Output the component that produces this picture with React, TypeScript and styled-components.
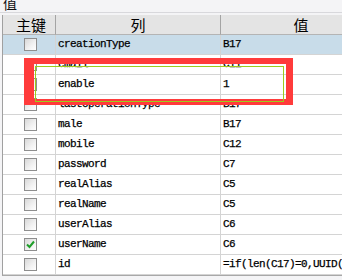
import React from "react"
import styled, { createGlobalStyle } from "styled-components"

const GlobalStyle = createGlobalStyle`
  html, body {
    margin: 0;
    padding: 0;
    background: #f0f0f0;
    overflow: hidden;
  }
`

type Row = { key: boolean; column: string; value: string }

const rows: Row[] = [
  { key: false, column: "creationType", value: "B17" },
  { key: false, column: "email", value: "C11" },
  { key: false, column: "enable", value: "1" },
  { key: false, column: "lastOperationType", value: "B17" },
  { key: false, column: "male", value: "B17" },
  { key: false, column: "mobile", value: "C12" },
  { key: false, column: "password", value: "C7" },
  { key: false, column: "realAlias", value: "C5" },
  { key: false, column: "realName", value: "C5" },
  { key: false, column: "userAlias", value: "C6" },
  { key: true, column: "userName", value: "C6" },
  { key: false, column: "id", value: "=if(len(C17)=0,UUID(),C17)" },
]

const Panel = styled.div`
  position: relative;
  width: 342px;
  height: 280px;
  overflow: hidden;
  background: #f4f4f6;
  display: flex;
  flex-direction: column;
`

const GroupTitle = styled.div`
  height: 12px;
  border-bottom: 1px solid #d8d8dc;
  font-family: "Noto Sans CJK SC", sans-serif;
  font-size: 14px;
  line-height: 12px;
  color: #111;
  padding-left: 3px;
  overflow: hidden;
  span {
    position: relative;
    top: -3px;
  }
`

const Grid = styled.div`
  margin: 2px 0 0 2px;
  border-left: 1px solid #a0a0a0;
  border-bottom: 1px solid #a8a8a8;
  display: grid;
  grid-template-columns: 53px 165px 160px;
  grid-auto-rows: 20px;
  grid-template-rows: 20px;
  background: #fff;
  width: max-content;
`

const HeadCell = styled.div<{ $last?: boolean; $pad?: number }>`
  background: #e4e4e4;
  border-bottom: 1px solid #b4b4b4;
  border-right: ${(p) => (p.$last ? "none" : "1px solid #a4a4a4")};
  box-sizing: border-box;
  font-family: "Noto Sans CJK SC", sans-serif;
  font-size: 15px;
  line-height: 19px;
  color: #000;
  display: flex;
  justify-content: center;
  padding-left: ${(p) => p.$pad ?? 0}px;
`

const Cell = styled.div<{ $selected?: boolean; $last?: boolean }>`
  background: ${(p) => (p.$selected ? "#c8dce9" : "#fff")};
  border-bottom: 1px solid #d4d4d4;
  border-right: ${(p) => (p.$last ? "none" : "1px solid #d4d4d4")};
  box-sizing: border-box;
  font-family: "Liberation Mono", monospace;
  font-size: 11px;
  letter-spacing: -0.6px;
  line-height: 19px;
  color: #000;
  -webkit-text-stroke: 0.25px #000;
  padding-left: 2px;
  white-space: nowrap;
  overflow: hidden;
`

const KeyCell = styled(Cell)`
  display: flex;
  align-items: center;
  justify-content: center;
  padding-left: 3px;
`

const Box = styled.span`
  width: 11px;
  height: 11px;
  border: 1px solid #8e8e8e;
  background: linear-gradient(135deg, #d8d8d8 0%, #f2f2f2 60%, #ffffff 100%);
  display: flex;
  align-items: center;
  justify-content: center;
`

const Highlight = styled.div`
  position: absolute;
  left: 24px;
  top: 58px;
  width: 269px;
  height: 47px;
  box-sizing: border-box;
  border-style: solid;
  border-color: #ff3b3b;
  border-width: 6px 7px 6px 10px;
`

const Focus = styled.div`
  position: absolute;
  left: 35px;
  top: 66px;
  width: 249px;
  height: 36px;
  box-sizing: border-box;
  border: 1px solid #9ccc1c;
`

function Check({ on }: { on: boolean }) {
  return (
    <Box>
      {on && (
        <svg width="11" height="11" viewBox="0 0 11 11">
          <path d="M2 5.5 L4.5 8 L9 2.5" fill="none" stroke="#1f9e2a" strokeWidth="2" />
        </svg>
      )}
    </Box>
  )
}

export default function App() {
  return (
    <>
      <GlobalStyle />
      <Panel>
        <GroupTitle>
          <span>值</span>
        </GroupTitle>
        <Grid>
          <HeadCell $pad={4}>主键</HeadCell>
          <HeadCell>列</HeadCell>
          <HeadCell $last>值</HeadCell>
          {rows.map((r, i) => (
            <React.Fragment key={r.column}>
              <KeyCell $selected={i === 0}>
                <Check on={r.key} />
              </KeyCell>
              <Cell $selected={i === 0}>{r.column}</Cell>
              <Cell $selected={i === 0} $last>
                {r.value}
              </Cell>
            </React.Fragment>
          ))}
        </Grid>
        <Highlight />
        <Focus />
      </Panel>
    </>
  )
}
